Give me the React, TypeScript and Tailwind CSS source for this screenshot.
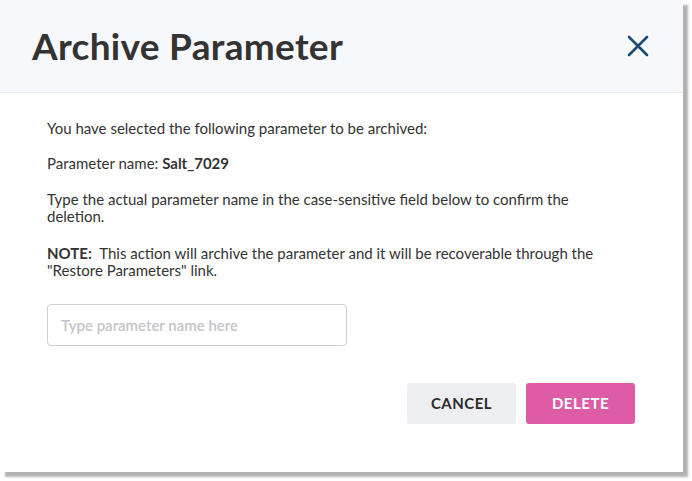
import React from 'react';

const App: React.FC = () => {
  return (
    <div className="w-[692px] h-[481px] bg-white" style={{ fontFamily: 'Lato, "Open Sans", sans-serif' }}>
      <div className="w-[683px] h-[472px] bg-white flex flex-col shadow-[5px_5px_2px_rgba(0,0,0,0.3)]">
        {/* Header */}
        <div className="h-[93px] shrink-0 bg-[#f7f8fb] border-b border-[#e8eaee] flex items-center justify-between pl-[32px] pr-[34px]">
          <h1 className="text-[37px] font-bold text-[#333333] tracking-[0.3px] leading-none pb-[1px]">Archive Parameter</h1>
          <button className="w-[22px] h-[22px] flex items-center justify-center text-[#1d4a74]">
            <svg width="22" height="22" viewBox="0 0 22 22" fill="none" stroke="currentColor" strokeWidth="2.6" strokeLinecap="round">
              <path d="M2 2L20 20M20 2L2 20" />
            </svg>
          </button>
        </div>

        {/* Body */}
        <div className="flex-1 px-[47px] pt-[27px] text-[15px] leading-[17px] text-[#333333]">
          <p>You have selected the following parameter to be archived:</p>
          <p className="mt-[18px]">
            Parameter name: <span className="font-bold">Salt_7029</span>
          </p>
          <p className="mt-[19px] w-[560px]">
            Type the actual parameter name in the case-sensitive field below to confirm the deletion.
          </p>
          <p className="mt-[20px] w-[560px]">
            <span className="font-bold mr-[4px]">NOTE:</span> This action will archive the parameter and it will be recoverable through the "Restore Parameters" link.
          </p>

          <input
            type="text"
            placeholder="Type parameter name here"
            className="mt-[25px] w-[300px] h-[42px] rounded-[4px] border border-[#cfcfd3] px-[13px] text-[15px] font-semibold placeholder:text-[#c3c4c9] outline-none"
          />

          <div className="flex justify-end gap-[10px] mt-[37px] pr-[1px]">
            <button className="w-[109px] h-[41px] rounded-[3px] bg-[#edeef2] text-[#2b2b2b] text-[15px] font-bold tracking-[0.5px]">
              CANCEL
            </button>
            <button className="w-[109px] h-[41px] rounded-[3px] bg-[#dc5da5] text-white text-[15px] font-bold tracking-[0.5px]">
              DELETE
            </button>
          </div>
        </div>
      </div>
    </div>
  );
};

export default App;
